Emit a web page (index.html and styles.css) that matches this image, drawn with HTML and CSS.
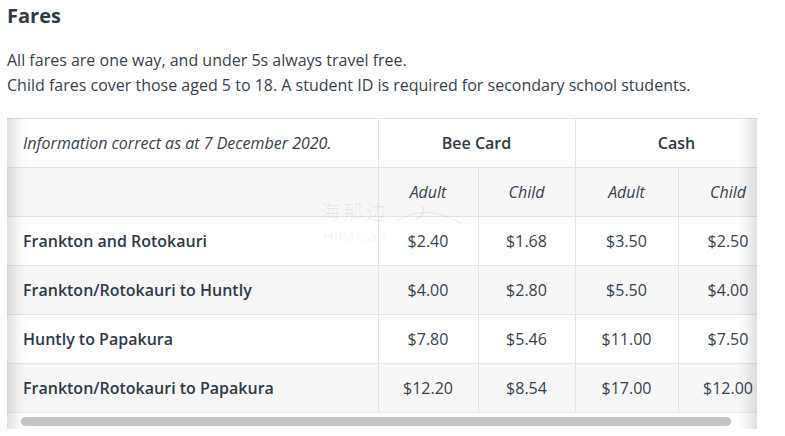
FILE: index.html
```html
<!DOCTYPE html>
<html lang="en">
<head>
<meta charset="utf-8">
<title>Fares</title>
<link rel="stylesheet" href="styles.css">
</head>
<body>
<h2 class="title">Fares</h2>
<p class="intro">All fares are one way, and under 5s always travel free.<br>Child fares cover those aged 5 to 18. A student ID is required for secondary school students.</p>
<div class="table-wrap">
  <div class="scroller">
    <table class="fares">
      <colgroup>
        <col class="c-route"><col class="c-a"><col class="c-b"><col class="c-c"><col class="c-d">
      </colgroup>
      <thead>
        <tr class="head1">
          <th class="note">Information correct as at 7 December 2020.</th>
          <th colspan="2">Bee Card</th>
          <th colspan="2">Cash</th>
        </tr>
        <tr class="head2">
          <th></th>
          <th class="sub">Adult</th>
          <th class="sub">Child</th>
          <th class="sub">Adult</th>
          <th class="sub">Child</th>
        </tr>
      </thead>
      <tbody>
        <tr><th>Frankton and Rotokauri</th><td>$2.40</td><td>$1.68</td><td>$3.50</td><td>$2.50</td></tr>
        <tr class="alt"><th>Frankton/Rotokauri to Huntly</th><td>$4.00</td><td>$2.80</td><td>$5.50</td><td>$4.00</td></tr>
        <tr><th>Huntly to Papakura</th><td>$7.80</td><td>$5.46</td><td>$11.00</td><td>$7.50</td></tr>
        <tr class="alt"><th>Frankton/Rotokauri to Papakura</th><td>$12.20</td><td>$8.54</td><td>$17.00</td><td>$12.00</td></tr>
      </tbody>
    </table>
  </div>
  <div class="scrollbar"><div class="thumb"></div></div>
  <div class="watermark">
    <div class="wm-text"><span class="wm-cn">海那边</span><span class="wm-en">Hinabian</span></div>
    <svg class="wm-swoosh" width="70" height="30" viewBox="0 0 70 30" aria-hidden="true">
      <path d="M2 20 C 20 8, 45 6, 68 22" fill="none" stroke="rgba(0,0,0,0.07)" stroke-width="1.2"/>
      <path d="M28 4 C 34 8, 30 14, 22 18" fill="none" stroke="rgba(0,0,0,0.07)" stroke-width="1.2"/>
    </svg>
  </div>
</div>
</body>
</html>
```
FILE: styles.css
```css
html, body {
  margin: 0;
  padding: 0;
  background: #ffffff;
}
body {
  padding: 0 7px;
  font-family: "Open Sans", "Noto Sans", "Noto Sans CJK SC", sans-serif;
  color: #333c46;
}
.title {
  margin: 2px 0 0;
  font-size: 20px;
  line-height: 27px;
  font-weight: 700;
  color: #2f3a46;
}
.intro {
  margin: 19px 0 0;
  font-size: 16px;
  line-height: 25px;
  color: #38424c;
}
.table-wrap {
  position: relative;
  margin-top: 20px;
  width: 750px;
}
.table-wrap::before,
.table-wrap::after {
  content: "";
  position: absolute;
  top: 0;
  bottom: 0;
  width: 20px;
  pointer-events: none;
  z-index: 2;
}
.table-wrap::before {
  left: 0;
  background: linear-gradient(to right, rgba(0,0,0,0.12), rgba(0,0,0,0.03) 60%, rgba(0,0,0,0));
}
.table-wrap::after {
  right: 0;
  background: linear-gradient(to left, rgba(0,0,0,0.12), rgba(0,0,0,0.03) 60%, rgba(0,0,0,0));
}
.scroller {
  overflow: hidden;
  border-top: 1px solid #e4e4e4;
  border-bottom: 1px solid #ececec;
}
.scrollbar {
  height: 16px;
  padding: 4px 26px 3px 14px;
  box-sizing: border-box;
  background: #ffffff;
}
.thumb {
  height: 9px;
  border-radius: 5px;
  background: #c4c4c4;
}
.fares {
  border-collapse: collapse;
  table-layout: fixed;
  width: 771px;
  font-size: 16px;
  line-height: 24px;
}
.c-route { width: 371px; }
.c-a { width: 100px; }
.c-b { width: 97px; }
.c-c { width: 103px; }
.c-d { width: 100px; }
.fares th,
.fares td {
  padding: 12px 16px;
  border: 1px solid #e4e4e4;
  text-align: center;
  white-space: nowrap;
}
.fares tr > :first-child {
  border-left: 0;
  text-align: left;
}
.fares tr:first-child > * {
  border-top: 0;
}
.fares tbody tr:last-child > * {
  border-bottom: 0;
}
.fares th {
  font-weight: 600;
  color: #2f3a46;
}
.fares td {
  font-weight: 400;
  color: #38424c;
}
.fares .note,
.fares .sub {
  font-weight: 400;
  font-style: italic;
  color: #38424c;
}
.head2,
.alt {
  background: #f7f7f7;
}
.watermark {
  position: absolute;
  left: 313px;
  top: 84px;
  display: flex;
  align-items: flex-start;
  gap: 4px;
  pointer-events: none;
  z-index: 1;
}
.wm-text {
  display: flex;
  flex-direction: column;
  align-items: center;
  gap: 3px;
  color: rgba(0,0,0,0.06);
}
.wm-cn {
  font-size: 20px;
  line-height: 22px;
  letter-spacing: 3px;
}
.wm-en {
  font-size: 15px;
  line-height: 16px;
}
.wm-swoosh {
  margin-top: 0;
}
```
